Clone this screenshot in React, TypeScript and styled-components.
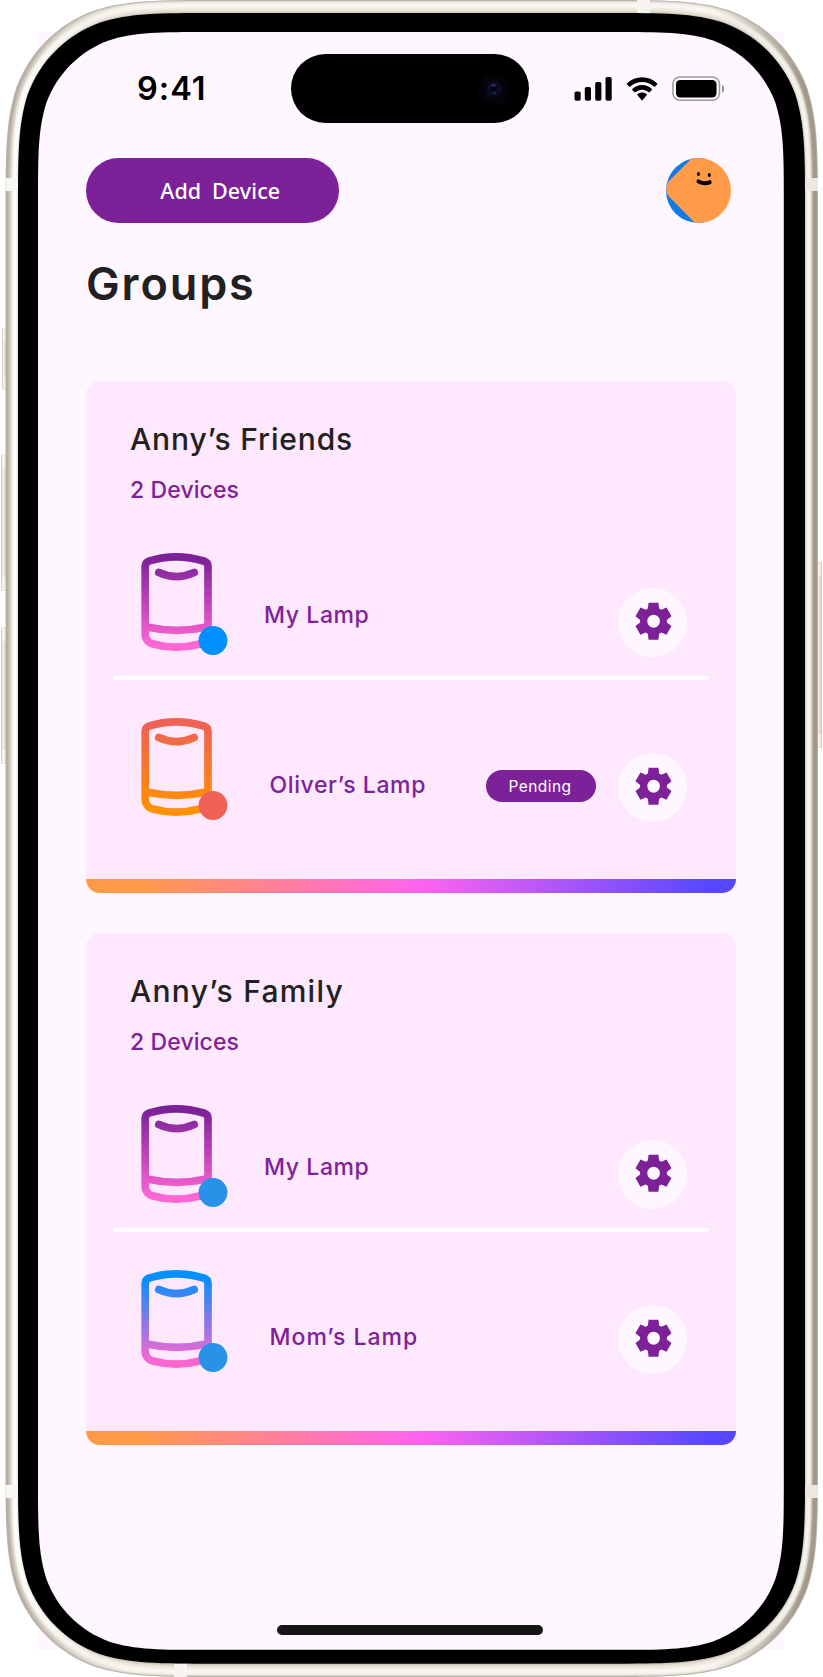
import React from 'react';
import styled, { createGlobalStyle } from 'styled-components';

const colors = {
  screen: '#fff7ff',
  card: '#fee8fd',
  purple: '#7d2199',
  ink: '#212121',
};

const GlobalStyle = createGlobalStyle`
  * { box-sizing: border-box; }
  body {
    margin: 0;
    background: #fff;
    font-family: Inter, "Liberation Sans", sans-serif;
  }
  button { border: 0; padding: 0; font: inherit; }
`;

const Phone = styled.div`
  position: relative;
  width: 823px;
  height: 1677px;
  overflow: hidden;
`;

const Bezel = styled.svg`
  position: absolute;
  inset: 0;
  display: block;
`;

const Screen = styled.div`
  position: relative;
  display: flex;
  flex-direction: column;
  height: 1650px;
  margin: 0 39px 0 38px;
  padding-top: 54px;
`;

const StatusBar = styled.div`
  display: flex;
  height: 69px;
  padding-left: 99px;
`;

const Time = styled.div`
  width: 154px;
  padding-top: 15px;
  font-size: 32.5px;
  font-weight: 600;
  line-height: 40px;
  color: #000;
  letter-spacing: 1px;
`;

const Island = styled.div`
  display: flex;
  align-items: center;
  justify-content: flex-end;
  width: 238px;
  height: 69px;
  padding-right: 19px;
  border-radius: 35px;
  background: #000;
`;

const StatusIcons = styled.svg`
  display: block;
  margin: 21px 0 0 45px;
`;

const Content = styled.main`
  display: flex;
  flex-direction: column;
  padding: 35px 48px 0;
`;

const TopBar = styled.div`
  display: flex;
  align-items: center;
  justify-content: space-between;
  padding-right: 5px;
`;

const AddButton = styled.button`
  width: 252.5px;
  height: 65px;
  padding: 0 0 1px 16px;
  border-radius: 33px;
  background: ${colors.purple};
  color: #fff;
  font-family: "Noto Sans", sans-serif;
  font-size: 21.5px;
  font-weight: 500;
  letter-spacing: 0.1px;
  word-spacing: 5px;
`;

const Heading = styled.h1`
  margin: 32.5px 0 0;
  font-size: 45px;
  font-weight: 600;
  line-height: 56px;
  letter-spacing: 1.9px;
  color: ${colors.ink};
`;

const Groups = styled.div`
  display: flex;
  flex-direction: column;
  gap: 40px;
  margin-top: 69.5px;
`;

const Card = styled.section`
  display: flex;
  flex-direction: column;
  height: 512px;
  border-radius: 14px;
  overflow: hidden;
  background: ${colors.card};
`;

const CardHead = styled.header`
  height: 172px;
  padding: 38px 44px 0;
`;

const CardTitle = styled.h2<{ $tracking: number }>`
  margin: 0 0 16px;
  font-size: 30px;
  font-weight: 500;
  line-height: 40px;
  letter-spacing: ${(p) => p.$tracking}px;
  color: ${colors.ink};
`;

const CardCount = styled.p`
  margin: 0;
  font-size: 23px;
  font-weight: 500;
  line-height: 30px;
  letter-spacing: 0.1px;
  color: ${colors.purple};
`;

const Row = styled.div`
  display: flex;
  height: 123px;
  padding: 0 49px 0 55px;
`;

const Divider = styled.hr`
  width: 595px;
  height: 4px;
  margin: 0 0 38px 27px;
  border: 0;
  background: #fff;
`;

const LampSvg = styled.svg`
  display: block;
  flex: none;
  overflow: visible;
`;

const Name = styled.div<{ $low?: boolean; $tracking: number }>`
  flex: 1;
  margin-left: ${(p) => (p.$low ? 35.5 : 30)}px;
  padding-top: ${(p) => (p.$low ? 51.5 : 46.5)}px;
  font-size: 23px;
  font-weight: 500;
  line-height: 30px;
  letter-spacing: ${(p) => p.$tracking}px;
  white-space: nowrap;
  color: ${colors.purple};
`;

const Badge = styled.span`
  display: flex;
  align-items: center;
  justify-content: center;
  width: 110px;
  height: 32px;
  margin: 52px 22px 0 0;
  padding-right: 2px;
  border-radius: 16px;
  background: ${colors.purple};
  color: #fff;
  font-size: 15.5px;
  font-weight: 400;
  letter-spacing: 0.45px;
`;

const GearButton = styled.button`
  display: flex;
  align-items: center;
  justify-content: center;
  width: 69px;
  height: 69px;
  margin-top: 35px;
  padding: 0 0 2px 1px;
  border-radius: 50%;
  background: ${colors.screen};
  color: ${colors.purple};
`;

const Rainbow = styled.div`
  height: 14px;
  margin-top: auto;
  background: linear-gradient(90deg, #ff9b48 8%, #ff64ee 51%, #5648ff 96%);
`;

const HomeIndicator = styled.div`
  width: 266px;
  height: 10px;
  margin: auto 0 15.5px 239px;
  border-radius: 5px;
  background: #161616;
`;

/* Rounded rectangle with continuous (smoothed) corners. */
function smoothRect(x: number, y: number, w: number, h: number, r: number) {
  const R = x + w;
  const B = y + h;
  const k = [1.52866, 1.08849, 0.86841, 0.63149, 0.37282, 0.16906, 0.07491].map((n) => n * r);
  const [a, b, c, d, e, f, g] = k;
  return [
    `M${x + a} ${y}H${R - a}`,
    `C${R - b} ${y} ${R - c} ${y} ${R - d} ${y + g}`,
    `C${R - e} ${y + f} ${R - f} ${y + e} ${R - g} ${y + d}`,
    `C${R} ${y + c} ${R} ${y + b} ${R} ${y + a}V${B - a}`,
    `C${R} ${B - b} ${R} ${B - c} ${R - g} ${B - d}`,
    `C${R - f} ${B - e} ${R - e} ${B - f} ${R - d} ${B - g}`,
    `C${R - c} ${B} ${R - b} ${B} ${R - a} ${B}H${x + a}`,
    `C${x + b} ${B} ${x + c} ${B} ${x + d} ${B - g}`,
    `C${x + e} ${B - f} ${x + f} ${B - e} ${x + g} ${B - d}`,
    `C${x} ${B - c} ${x} ${B - b} ${x} ${B - a}V${y + a}`,
    `C${x} ${y + b} ${x} ${y + c} ${x + g} ${y + d}`,
    `C${x + f} ${y + e} ${x + e} ${y + f} ${x + d} ${y + g}`,
    `C${x + c} ${y} ${x + b} ${y} ${x + a} ${y}Z`,
  ].join('');
}

/* Metal band, from the outer edge inwards: [inset, left, middle, right]. */
const rings: [number, string, string, string][] = [
  [0, '#b9b2a8', '#b8b3aa', '#b9b1a4'],
  [1, '#b5ada3', '#dedace', '#a1988a'],
  [2, '#b8b0a6', '#efebe2', '#a0978a'],
  [3, '#c9c2b8', '#f3f1ea', '#a39a8c'],
  [4, '#cfc8bd', '#f7f6f1', '#a79e90'],
  [5, '#ddd6cb', '#f8f7f3', '#b3ab9d'],
  [6, '#efebe3', '#f8f6f1', '#dcd6ca'],
  [7, '#f8f6f2', '#f3f1ea', '#e9e5db'],
  [8, '#fdfcfa', '#efece3', '#f3f1eb'],
  [9, '#fefefd', '#ebe7dd', '#f5f3ee'],
  [10, '#fdfcfb', '#e5e1d5', '#f3f1eb'],
  [11, '#f6f4ef', '#ddd9cc', '#ebe8df'],
  [12, '#dedad2', '#cfcabb', '#d3cec3'],
];

const sideButtons = [
  { x: 2, y: 328, w: 5, h: 62 },
  { x: 1, y: 454, w: 6, h: 137 },
  { x: 1, y: 627, w: 6, h: 137 },
  { x: 816, y: 562, w: 6, h: 186 },
];

const antennas = [
  { x: 5.5, y: 178, w: 12.5, h: 13, c: '#f7f6f2' },
  { x: 805, y: 178, w: 13, h: 13, c: '#ebe8df' },
  { x: 5.5, y: 1485, w: 12.5, h: 13, c: '#f7f6f2' },
  { x: 805, y: 1485, w: 13, h: 13, c: '#ebe8df' },
  { x: 637, y: 0, w: 13, h: 13, c: '#f4f3ee' },
  { x: 174, y: 1664, w: 13, h: 13, c: '#f6f5f1' },
];

function PhoneFrame() {
  return (
    <Bezel width="823" height="1677" viewBox="0 0 823 1677" aria-hidden="true">
      <defs>
        {rings.map(([i, l, m, r]) => (
          <linearGradient key={i} id={`ring${i}`} gradientUnits="userSpaceOnUse" x1="5" y1="0" x2="818" y2="0">
            <stop offset="0.02" stopColor={l} />
            <stop offset="0.15" stopColor={m} />
            <stop offset="0.87" stopColor={m} />
            <stop offset="0.98" stopColor={r} />
          </linearGradient>
        ))}
        <linearGradient id="key">
          <stop offset="0" stopColor="#cfc7b9" />
          <stop offset="0.3" stopColor="#f2eee5" />
          <stop offset="0.7" stopColor="#e4dccd" />
          <stop offset="1" stopColor="#cbc1b0" />
        </linearGradient>
      </defs>
      <rect x="38" y="32" width="746" height="1618" fill={colors.screen} />
      {sideButtons.map((b) => (
        <g key={`${b.x}-${b.y}`}>
          <rect x={b.x} y={b.y} width={b.w} height={b.h} rx="1" fill="url(#key)" />
          <rect x={b.x + 1} y={b.y + 1} width={b.w - 2} height="13" fill="#f8f6f1" opacity="0.7" />
          <rect x={b.x + 1} y={b.y + b.h - 14} width={b.w - 2} height="13" fill="#f8f6f1" opacity="0.7" />
        </g>
      ))}
      {rings.map(([i]) => (
        <path key={i} d={smoothRect(5.5 + i, i, 812.5 - 2 * i, 1677 - 2 * i, 140 - i * 0.8)} fill={`url(#ring${i})`} />
      ))}
      {antennas.map((a) => (
        <rect key={`${a.x}-${a.y}`} x={a.x} y={a.y} width={a.w} height={a.h} fill={a.c} />
      ))}
      <path d={smoothRect(18, 13, 787, 1650.7, 129)} fill="#000" />
      <path d={smoothRect(38, 32, 745.8, 1617.8, 112)} fill={colors.screen} />
    </Bezel>
  );
}

function Camera() {
  return (
    <svg width="32" height="32" viewBox="0 0 32 32" aria-hidden="true">
      <circle cx="16" cy="16" r="16" fill="#040307" />
      <circle cx="16" cy="16" r="9" fill="#090817" />
      <circle cx="16" cy="16" r="6.5" fill="#0b0b2b" />
      <circle cx="16" cy="16" r="3.2" fill="#04040f" />
      <ellipse cx="15.5" cy="12.3" rx="2.4" ry="1.4" fill="#2a2a66" />
      <ellipse cx="16.3" cy="19.8" rx="2" ry="1.3" fill="#0c3a3c" />
    </svg>
  );
}

function Indicators() {
  return (
    <StatusIcons width="152" height="28" viewBox="0 0 152 28" aria-hidden="true">
      <rect x="0.5" y="16.5" width="6.2" height="9.3" rx="1.8" />
      <rect x="10.8" y="12" width="6.2" height="13.8" rx="1.8" />
      <rect x="21.2" y="7" width="6.2" height="18.8" rx="1.8" />
      <rect x="31.5" y="2" width="6.2" height="23.8" rx="1.8" />
      <path d="M68.1 6.9c4.5 0 8.8 1.7 12 4.8.3.2.6.2.8 0l2.4-2.4c.3-.3.3-.7 0-.9-8.5-8.1-21.9-8.1-30.4 0-.3.2-.3.6 0 .9l2.4 2.4c.2.2.5.2.8 0 3.2-3.1 7.5-4.8 12-4.8z" />
      <path d="M68.1 14.7c2.4 0 4.8.9 6.6 2.6.3.2.6.2.8 0l2.4-2.4c.3-.3.3-.7 0-.9-5.5-5.2-14.1-5.2-19.6 0-.3.2-.3.6 0 .9l2.4 2.4c.2.2.6.2.8 0 1.8-1.7 4.2-2.6 6.6-2.6z" />
      <path d="M72.8 20c.3-.3.3-.7 0-.9-2.7-2.3-6.7-2.3-9.4 0-.3.2-.3.6 0 .9l4.3 5.3c.2.3.6.3.8 0z" />
      <rect x="98.9" y="2" width="46.6" height="23.3" rx="7" fill="none" stroke="#000" strokeOpacity="0.38" strokeWidth="1.5" />
      <rect x="102" y="5" width="40.5" height="17.5" rx="4.2" />
      <path d="M148 10c3 1 3 6.8 0 7.8z" fillOpacity="0.4" />
    </StatusIcons>
  );
}

function Avatar() {
  return (
    <svg width="65" height="65" viewBox="0 0 65 65" aria-hidden="true">
      <clipPath id="face">
        <circle cx="32.5" cy="32.5" r="32.5" />
      </clipPath>
      <g clipPath="url(#face)">
        <path d="M38-10H-2V75H45z" fill="#117be3" />
        <path d="M66-10V75H38L29 65 2 37.5Q-2 30.8 2 24L26 0 36-10z" fill="#ff9b48" />
      </g>
      <ellipse cx="32.5" cy="15.9" rx="1.5" ry="2" />
      <ellipse cx="43.3" cy="16.9" rx="1.5" ry="2" />
      <path d="M32.500 23.300c3.500 2.400 8.500 2.600 11.200.9" fill="none" stroke="#000" strokeWidth="4" strokeLinecap="round" />
    </svg>
  );
}

function Gear() {
  return (
    <svg width="43" height="44.4" viewBox="0 0 24 24" preserveAspectRatio="none" fill="currentColor" aria-hidden="true">
      <path d="M9.25 22l-.4-3.2q-.325-.125-.612-.3-.288-.175-.563-.375L4.7 19.375l-2.75-4.75 2.575-1.95Q4.5 12.5 4.5 12.337v-.675q0-.162.025-.337L1.95 9.375l2.75-4.75 2.975 1.25q.275-.2.575-.375.3-.175.6-.3l.4-3.2h5.5l.4 3.2q.325.125.613.3.287.175.562.375l2.975-1.25 2.75 4.75-2.575 1.95q.025.175.025.337v.675q0 .163-.05.338l2.575 1.95-2.75 4.75-2.95-1.25q-.275.2-.575.375-.3.175-.6.3l-.4 3.2Zm2.8-6.5q1.45 0 2.475-1.025Q15.55 13.45 15.55 12q0-1.45-1.025-2.475Q13.5 8.5 12.05 8.5q-1.475 0-2.488 1.025Q8.55 10.55 8.55 12q0 1.45 1.012 2.475Q10.575 15.5 12.05 15.5Z" />
    </svg>
  );
}

interface LampProps {
  id: string;
  top: string;
  bottom: string;
  dot: string;
}

function Lamp({ id, top, bottom, dot }: LampProps) {
  return (
    <LampSvg width="93" height="102" viewBox="0 0 93 102" aria-hidden="true">
      <defs>
        <linearGradient id={id} gradientUnits="userSpaceOnUse" x1="0" y1="6" x2="0" y2="92">
          <stop offset="0" stopColor={top} />
          <stop offset="1" stopColor={bottom} />
        </linearGradient>
      </defs>
      <g fill="none" stroke={`url(#${id})`} strokeWidth="7.7" strokeLinejoin="round">
        <path d="M4.2 13.5C4.2 10.8 5.8 8.900 8.500 7.900C25 2.700 45 2.700 62.700 8C65.400 8.900 67 10.800 67 13.500V82C67 87 64 90 59 91C43 95.200 27 95.200 12 91C8 90 4.200 87 4.200 81Z" />
        <path d="M4.200 73.800Q35.600 80.800 67 73.800" />
        <path d="M17.800 19.600Q35.500 27.800 53.200 19.600" strokeLinecap="round" />
      </g>
      <circle cx="72" cy="87.500" r="14.400" fill={dot} />
    </LampSvg>
  );
}

interface Device extends LampProps {
  name: string;
  tracking: number;
  pending?: boolean;
}

const groups: { title: string; tracking: number; devices: Device[] }[] = [
  {
    title: 'Anny’s Friends',
    tracking: 0.85,
    devices: [
      { id: 'friends-mine', name: 'My Lamp', tracking: 0.6, top: '#7d2199', bottom: '#ff66d6', dot: '#008fff' },
      { id: 'friends-oliver', name: 'Oliver’s Lamp', tracking: 0.6, top: '#ef6155', bottom: '#ff9100', dot: '#ef6155', pending: true },
    ],
  },
  {
    title: 'Anny’s Family',
    tracking: 1.25,
    devices: [
      { id: 'family-mine', name: 'My Lamp', tracking: 0.6, top: '#7d2199', bottom: '#ff66d6', dot: '#2792e8' },
      { id: 'family-mom', name: 'Mom’s Lamp', tracking: 1, top: '#0090ff', bottom: '#ff66d0', dot: '#2792e8' },
    ],
  },
];

export default function App() {
  return (
    <>
      <GlobalStyle />
      <Phone>
        <PhoneFrame />
        <Screen>
          <StatusBar>
            <Time>9:41</Time>
            <Island>
              <Camera />
            </Island>
            <Indicators />
          </StatusBar>
          <Content>
            <TopBar>
              <AddButton>Add Device</AddButton>
              <Avatar />
            </TopBar>
            <Heading>Groups</Heading>
            <Groups>
              {groups.map((group) => (
                <Card key={group.title}>
                  <CardHead>
                    <CardTitle $tracking={group.tracking}>{group.title}</CardTitle>
                    <CardCount>{group.devices.length} Devices</CardCount>
                  </CardHead>
                  {group.devices.map((device, i) => (
                    <React.Fragment key={device.id}>
                      {i > 0 && <Divider />}
                      <Row>
                        <Lamp id={device.id} top={device.top} bottom={device.bottom} dot={device.dot} />
                        <Name $low={i > 0} $tracking={device.tracking}>
                          {device.name}
                        </Name>
                        {device.pending && <Badge>Pending</Badge>}
                        <GearButton aria-label="Settings">
                          <Gear />
                        </GearButton>
                      </Row>
                    </React.Fragment>
                  ))}
                  <Rainbow />
                </Card>
              ))}
            </Groups>
          </Content>
          <HomeIndicator />
        </Screen>
      </Phone>
    </>
  );
}
